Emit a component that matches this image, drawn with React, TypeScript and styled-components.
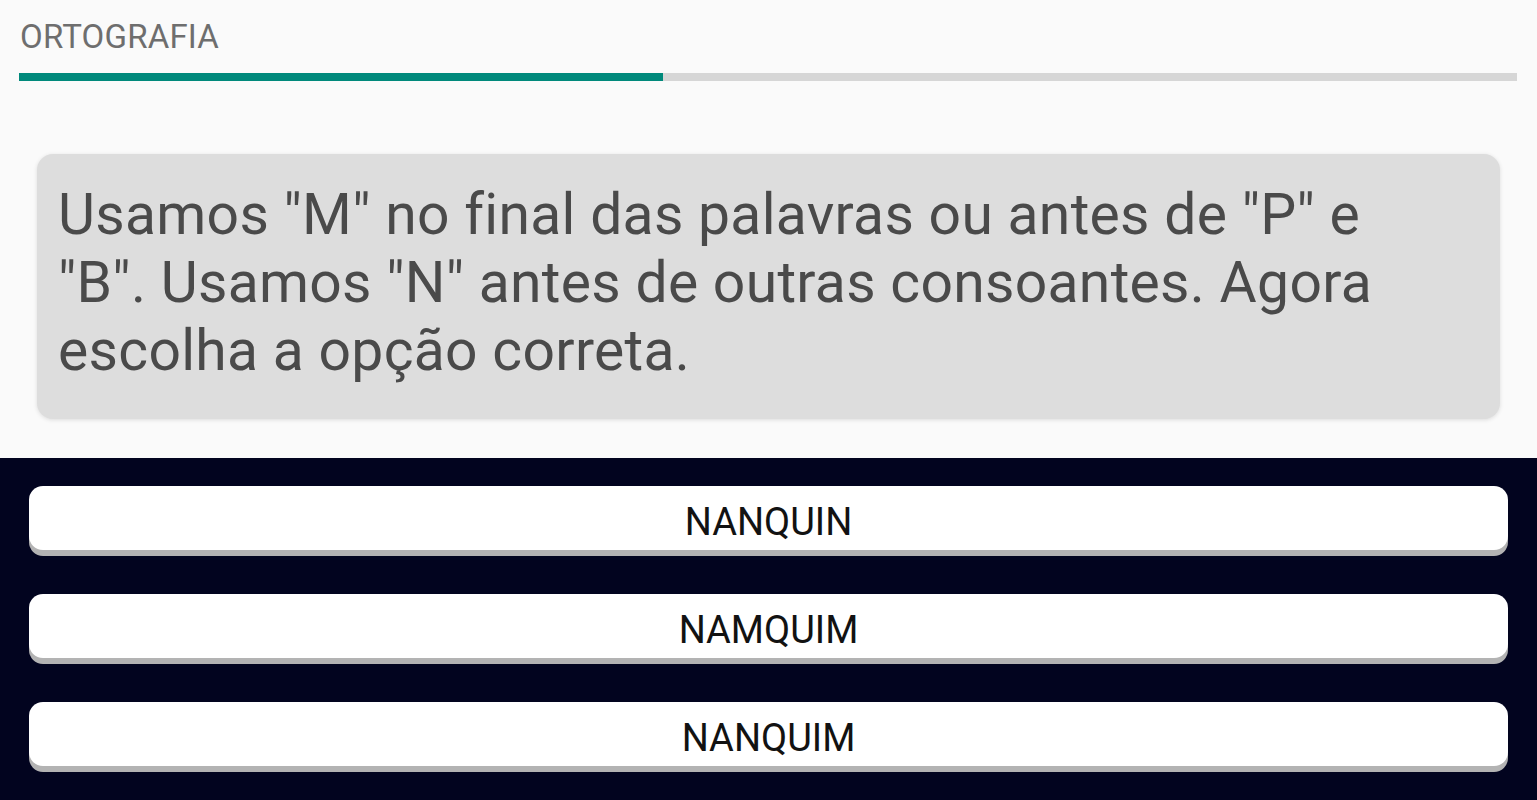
import styled, { createGlobalStyle } from "styled-components";

const GlobalStyle = createGlobalStyle`
  html, body {
    margin: 0;
    padding: 0;
    background: #fafafa;
    font-family: Roboto, "Noto Sans", sans-serif;
  }
`;

const Screen = styled.div`
  width: 1537px;
  height: 800px;
  display: flex;
  flex-direction: column;
  overflow: hidden;
`;

const TopArea = styled.section`
  background: #fafafa;
  padding: 15px 19px 0;
  height: 458px;
  box-sizing: border-box;
  display: flex;
  flex-direction: column;
`;

const Title = styled.h2`
  margin: 0 0 0 1px;
  font-size: 33px;
  font-weight: 400;
  line-height: 44px;
  letter-spacing: 0.2px;
  color: #6e6e6e;
`;

const Progress = styled.div`
  margin-top: 14px;
  height: 8px;
  width: 1498px;
  background: #d6d6d6;
`;

const ProgressFill = styled.div`
  height: 100%;
  background: #00897b;
`;

const Card = styled.div`
  margin: 73px 18px 0 18px;
  background: #dddddd;
  border-radius: 16px;
  box-shadow: 0 1px 4px rgba(0, 0, 0, 0.12);
  padding: 27px 60px 34px 21px;
  font-size: 57px;
  line-height: 68px;
  letter-spacing: 0.3px;
  color: #4a4a4a;
`;

const Answers = styled.section`
  flex: 1;
  background: #02041f;
  padding: 28px 29px 0;
  display: flex;
  flex-direction: column;
  gap: 44px;
`;

const AnswerButton = styled.button`
  height: 64px;
  width: 100%;
  border: none;
  border-radius: 14px;
  background: #ffffff;
  box-shadow: 0 6px 0 #b3b3b3;
  font-family: Roboto, "Noto Sans", sans-serif;
  font-size: 38px;
  font-weight: 400;
  color: #121212;
  cursor: pointer;
  padding: 8px 0 0;
`;

const options = ["NANQUIN", "NAMQUIM", "NANQUIM"];

export default function App() {
  const progress = 644 / 1498;
  return (
    <Screen>
      <GlobalStyle />
      <TopArea>
        <Title>ORTOGRAFIA</Title>
        <Progress>
          <ProgressFill style={{ width: `${progress * 100}%` }} />
        </Progress>
        <Card>
          Usamos "M" no final das palavras ou antes de "P" e "B". Usamos "N"
          antes de outras consoantes. Agora escolha a opção correta.
        </Card>
      </TopArea>
      <Answers>
        {options.map((o) => (
          <AnswerButton key={o}>{o}</AnswerButton>
        ))}
      </Answers>
    </Screen>
  );
}
